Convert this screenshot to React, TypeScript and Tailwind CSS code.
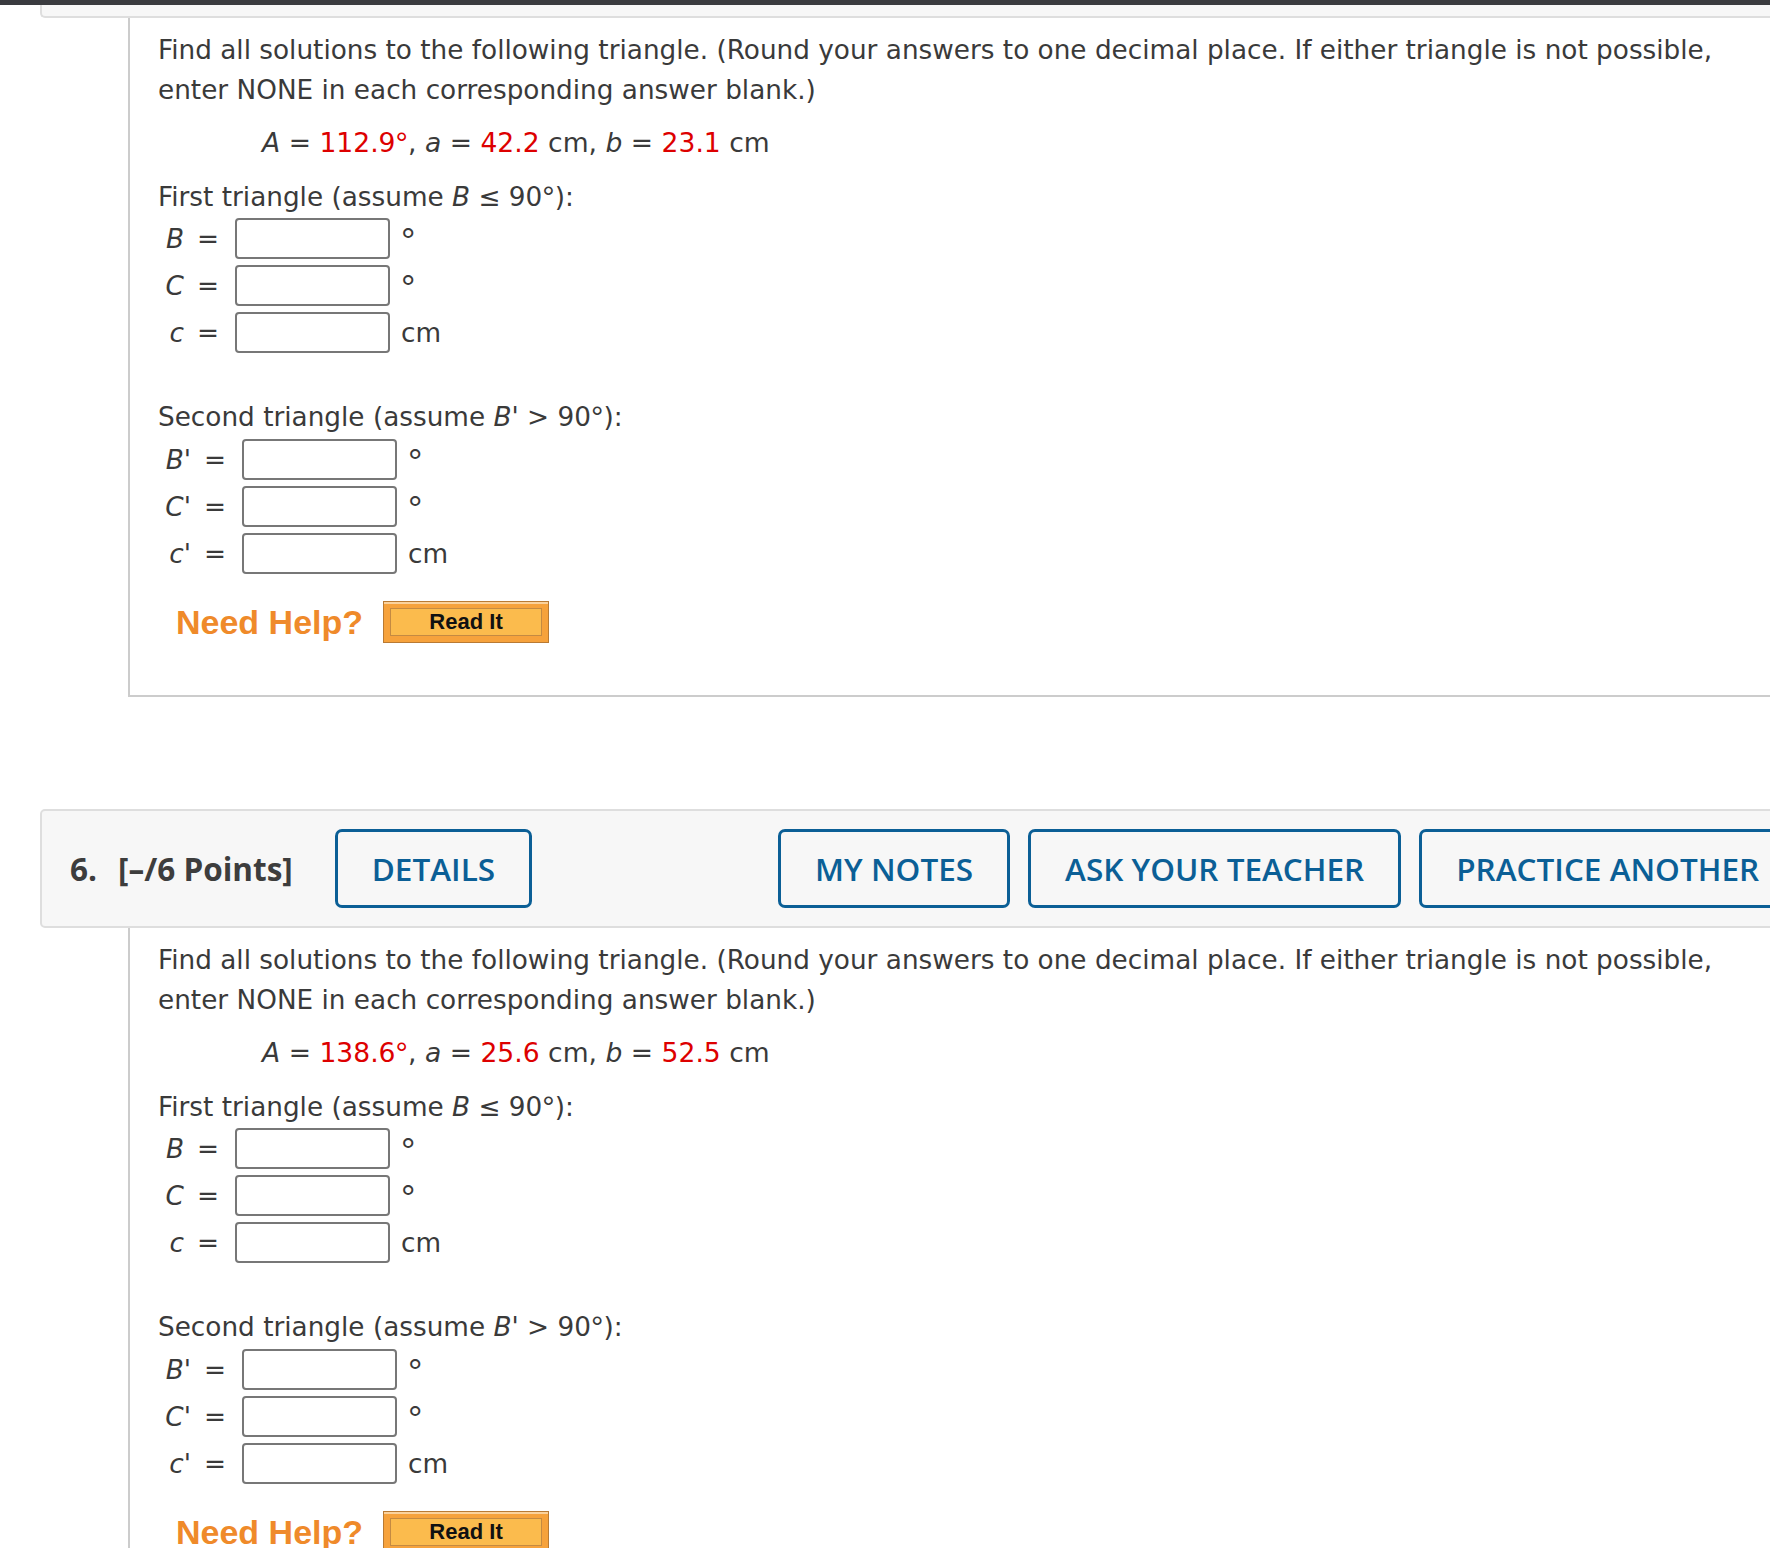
import { ReactNode } from 'react'

/* ------------------------------------------------------------------ */
/*  Problem data                                                       */
/* ------------------------------------------------------------------ */

type Given = { A: string; a: string; b: string }

const PROBLEMS: Given[] = [
  { A: '112.9', a: '42.2', b: '23.1' },
  { A: '138.6', a: '25.6', b: '52.5' },
]

const textFont = { fontFamily: '"DejaVu Sans", Verdana, sans-serif' }

/* ------------------------------------------------------------------ */
/*  Small pieces                                                       */
/* ------------------------------------------------------------------ */

function Red({ children }: { children: ReactNode }) {
  return <span className="text-[#dd0000]">{children}</span>
}

// Verdana's degree ring is bigger than DejaVu's, Liberation Sans comes closer.
// line-height 0 so the bigger glyph doesn't grow the line box
function Deg({ big = false }: { big?: boolean }) {
  return (
    <span
      style={{ fontFamily: '"Liberation Sans", Arial, sans-serif' }}
      className={big ? 'relative top-[6px] text-[36px] leading-[0]' : 'relative top-[2px] text-[31px] leading-[0]'}
    >
      °
    </span>
  )
}

function AnswerRow({ label, unit, labelWidth }: { label: ReactNode; unit: ReactNode; labelWidth: string }) {
  return (
    <div className="flex items-center h-[41px]">
      <div className={`${labelWidth} flex justify-end items-center whitespace-nowrap`}>
        {label}
        <span className="ml-[13px]">=</span>
      </div>
      <input
        type="text"
        className="ml-[16px] w-[155px] h-[41px] border-2 border-[#777777] rounded-[4px] bg-white outline-none"
      />
      <span className="ml-[11px] leading-[40px]">{unit}</span>
    </div>
  )
}

function ReadIt() {
  return (
    <div className="w-[166px] h-[42px] border border-[#b97a33] bg-[#f6a23c] p-[6px] flex" style={{ boxShadow: 'inset 0 2px 0 #fbd29c' }}>
      <div
        className="flex-1 border border-[#c48a42] bg-[#fbbb4d] flex items-center justify-center text-[22px] font-bold text-[#111]"
        style={{ fontFamily: '"Liberation Sans", Arial, sans-serif' }}
      >
        Read It
      </div>
    </div>
  )
}

function NeedHelp() {
  return (
    <div className="flex items-center ml-[18px] mt-[27px] h-[42px]">
      <span
        className="text-[34px] font-bold text-[#ef8a2a] leading-none"
        style={{ fontFamily: '"Liberation Sans", Arial, sans-serif' }}
      >
        Need Help?
      </span>
      <div className="ml-[20px]">
        <ReadIt />
      </div>
    </div>
  )
}

/* ------------------------------------------------------------------ */
/*  Question body                                                      */
/* ------------------------------------------------------------------ */

function QuestionBody({ g, bottomBorder }: { g: Given; bottomBorder: boolean }) {
  return (
    <div
      className={`ml-[128px] border-l-2 border-[#cccccc] pl-[28px] pt-[12px] text-[26.3px] leading-[40px] text-[#3a3a3a] ${
        bottomBorder ? 'border-b-2 pb-[52px]' : 'pb-[40px]'
      }`}
      style={textFont}
    >
      <p className="whitespace-nowrap">
        Find all solutions to the following triangle. (Round your answers to one decimal place. If either triangle is not possible,
        <br />
        enter NONE in each corresponding answer blank.)
      </p>

      <p className="mt-[13px] ml-[104px] whitespace-nowrap text-[26.6px]">
        <i>A</i> = <Red>{g.A}<Deg /></Red>, <i>a</i> = <Red>{g.a}</Red> cm, <i>b</i> = <Red>{g.b}</Red> cm
      </p>

      <p className="mt-[14px] whitespace-nowrap">
        First triangle (assume <i>B</i> ≤ 90<Deg />):
      </p>
      <div className="mt-[1px] flex flex-col gap-[6px]">
        <AnswerRow labelWidth="w-[61px]" label={<i>B</i>} unit={<Deg big />} />
        <AnswerRow labelWidth="w-[61px]" label={<i>C</i>} unit={<Deg big />} />
        <AnswerRow labelWidth="w-[61px]" label={<i>c</i>} unit="cm" />
      </div>

      <p className="mt-[44px] whitespace-nowrap">
        Second triangle (assume <i>B</i>' &gt; 90<Deg />):
      </p>
      <div className="mt-[2px] flex flex-col gap-[6px]">
        <AnswerRow labelWidth="w-[68px]" label={<span><i>B</i>'</span>} unit={<Deg big />} />
        <AnswerRow labelWidth="w-[68px]" label={<span><i>C</i>'</span>} unit={<Deg big />} />
        <AnswerRow labelWidth="w-[68px]" label={<span><i>c</i>'</span>} unit="cm" />
      </div>

      <NeedHelp />
    </div>
  )
}

/* ------------------------------------------------------------------ */
/*  Question header bar                                                */
/* ------------------------------------------------------------------ */

function HeaderButton({ children, className = '' }: { children: ReactNode; className?: string }) {
  return (
    <div
      className={`h-[79px] shrink-0 border-[3px] border-[#0b5f96] rounded-[7px] px-[34px] flex items-center text-[31.5px] font-semibold text-[#0b5f96] whitespace-nowrap ${className}`}
    >
      {children}
    </div>
  )
}

function QuestionHeader({ num }: { num: number }) {
  return (
    <div
      className="ml-[40px] w-[1800px] h-[119px] bg-[#f7f7f7] border-2 border-[#dedede] rounded-l-[5px] flex items-center pl-[28px]"
      style={{ fontFamily: '"Open Sans", sans-serif' }}
    >
      <span className="text-[31.5px] font-bold text-[#3d3d3d] whitespace-nowrap">
        {num}.<span className="ml-[21px]">[–/6 Points]</span>
      </span>
      <HeaderButton className="ml-[42px]">DETAILS</HeaderButton>
      <HeaderButton className="ml-[246px]">MY NOTES</HeaderButton>
      <HeaderButton className="ml-[18px]">ASK YOUR TEACHER</HeaderButton>
      <HeaderButton className="ml-[18px]">PRACTICE ANOTHER</HeaderButton>
    </div>
  )
}

/* ------------------------------------------------------------------ */
/*  Page                                                               */
/* ------------------------------------------------------------------ */

export default function App() {
  return (
    <div className="w-full h-[1548px] overflow-hidden bg-white">
      <div className="h-[5px] bg-[#3a3b3f]" />
      {/* tail end of the previous question's header */}
      <div className="ml-[40px] h-[13px] bg-[#f7f7f7] border-l-2 border-b-2 border-[#dedede] rounded-bl-[5px]" />

      <QuestionBody g={PROBLEMS[0]} bottomBorder />

      <div className="mt-[112px]">
        <QuestionHeader num={6} />
        <QuestionBody g={PROBLEMS[1]} bottomBorder={false} />
      </div>
    </div>
  )
}
